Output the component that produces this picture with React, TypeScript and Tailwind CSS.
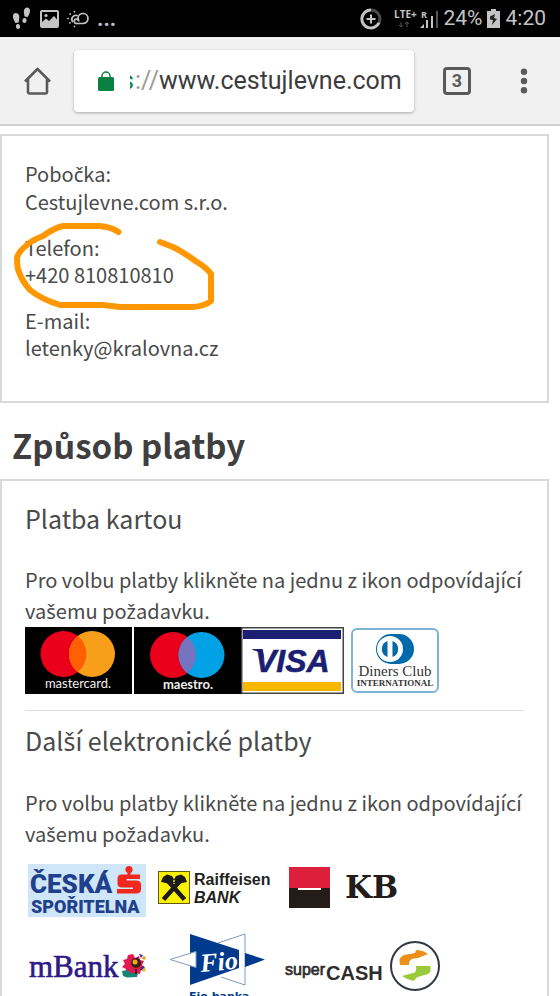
import type { ReactNode } from "react";

const PAYMENT_HINT =
  "Pro volbu platby klikněte na jednu z ikon odpovídající vašemu požadavku.";

interface CzechProps {
  text: string;
}

function Czech({ text }: CzechProps) {
  return (
    <>
      {text.split(/([čšž])/).map((part, i) =>
        i % 2 === 1 ? (
          <span key={i} className="font-['Noto_Sans',sans-serif]">
            {part}
          </span>
        ) : (
          part
        )
      )}
    </>
  );
}

function StatusBar() {
  return (
    <div className="flex h-[37px] shrink-0 items-center justify-between bg-black pr-[14px] pl-3 font-['Roboto',sans-serif] text-[#c4c4c4]">
      <div className="flex items-center gap-2">
        <svg className="h-6 w-5" viewBox="0 0 20 24" fill="currentColor">
          <path d="M4 6c2.400 0 3.600 2.200 3.300 4.600L6.700 15.500 3.400 16C2.200 13.500.8 11.200.9 9 1 7.200 2.200 6 4 6z" />
          <ellipse cx="6" cy="19.500" rx="2.100" ry="2.500" transform="rotate(-12 6 19.500)" />
          <path d="M15 .5c1.900 0 3 1.400 3 3.400 0 2.400-1.400 4.300-2.300 6.200l-3.200-.6-.6-4.200C11.600 2.700 12.800.5 15 .5z" />
          <ellipse cx="12.500" cy="13.500" rx="2.100" ry="2.500" transform="rotate(12 12.500 13.500)" />
        </svg>
        <svg className="h-[18px] w-[19px]" viewBox="0 0 19 18" fill="none">
          <rect x="1" y="1" width="17" height="16" rx="1" stroke="currentColor" strokeWidth="2" />
          <circle cx="6" cy="5.500" r="1.600" fill="currentColor" />
          <path d="M2 16v-4l4-3.500L9 11l5-5 3.500 4v6z" fill="currentColor" />
        </svg>
        <svg
          className="h-[18px] w-[22px]"
          viewBox="0 0 22 18"
          fill="none"
          stroke="currentColor"
          strokeWidth="1.700"
          strokeLinecap="round"
        >
          <path d="M9.500 13.500h6.500A5 5 0 1 0 11 8" />
          <path d="M11 8c0 1.200.3 2 .8 2.800M9.500 13.500A2.200 2.200 0 1 1 11.500 10.500" />
          <path d="M5.500 11.500A4 4 0 0 1 10 5.500" />
          <path d="M7.500 1.500v.3M3 4l.2.200M1 8.500h.3M2.800 13l.2-.2M7.500 16.500v-.2" />
        </svg>
        <span className="text-[22px] font-bold">...</span>
      </div>
      <div className="flex items-center gap-1">
        <svg className="mr-2 h-[22px] w-[22px]" viewBox="0 0 22 22" fill="none" strokeWidth="3">
          <path d="M11 2a9 9 0 0 1 9 9c0 1.500-.4 2.500-.9 3.600" stroke="#4b4b4b" />
          <path d="M11 2a9 9 0 1 0 8.100 12.600" stroke="currentColor" />
          <path d="M11 6.500v9M6.500 11h9" stroke="currentColor" strokeWidth="2" />
        </svg>
        <svg className="h-6 w-[46px] overflow-visible" viewBox="0 -4 46 24" fill="currentColor">
          <text x="0" y="7" fontSize="10" fontWeight="700" fontFamily="Open Sans">
            LTE+
          </text>
          <text x="27" y="7" fontSize="9" fontWeight="700" fontFamily="Open Sans">
            R
          </text>
          <path d="M7 11v5M5 14l2 2 2-2M13 16v-5M11 13l2-2 2 2" stroke="#555" fill="none" />
          <path d="M26 17h4v-4zM32 17V9h2v8zM37 17V5h2v12z" />
          <path d="M42 17V0h2v17z" fill="#555" />
        </svg>
        <span className="text-[21px]">24%</span>
        <svg className="h-5 w-[13px]" viewBox="0 0 13 20">
          <path d="M4 0h5v2h4v17H0V2h4z" fill="#c4c4c4" />
          <path d="M3 7.500 8 5 7 9l3 1-5 6 1-5-3-.5z" fill="#222" />
        </svg>
        <span className="ml-[2px] text-[21px]">4:20</span>
      </div>
    </div>
  );
}

function BrowserBar() {
  return (
    <header className="flex h-[89px] shrink-0 items-center border-b-2 border-[#d0d0d0] bg-[#f1f1f1] pr-[31px] pl-6 font-['Roboto',sans-serif]">
      <button type="button" aria-label="Home" className="text-[#5a5a5a]">
        <svg
          className="h-7 w-7"
          viewBox="0 0 28 28"
          fill="none"
          stroke="currentColor"
          strokeWidth="2.600"
          strokeLinejoin="round"
        >
          <path d="M1 14.500 13.500 2 26 14.500M4 12V25a1.500 1.500 0 0 0 1.500 1.500h16A1.500 1.500 0 0 0 23 25V12" />
        </svg>
      </button>
      <div className="ml-[22px] flex h-[62px] flex-1 items-center rounded-sm bg-white pl-6 text-[25px] shadow-[0_1px_3px_rgba(0,0,0,0.3)]">
        <svg className="h-5 w-4 shrink-0" viewBox="0 0 16 20">
          <path d="M4 8V5a4 4 0 0 1 8 0v3" fill="none" stroke="#0b8043" strokeWidth="1.500" />
          <rect y="6" width="16" height="14" rx="1.500" fill="#0b8043" />
        </svg>
        <span className="ml-4 flex h-8 w-1 shrink-0 items-center justify-end overflow-hidden text-[#0b8043]">
          s
        </span>
        <label htmlFor="address" className="pl-px text-[#9a9a9a]">
          ://
        </label>
        <input
          id="address"
          defaultValue="www.cestujlevne.com"
          className="w-0 flex-1 bg-transparent text-[#3c3c3c] outline-none"
        />
      </div>
      <button
        type="button"
        aria-label="Tabs"
        className="ml-[29px] h-7 w-7 rounded-sm border-3 border-[#5a5a5a] text-[18px] leading-[22px] font-bold text-[#5a5a5a]"
      >
        3
      </button>
      <button type="button" aria-label="Menu" className="ml-12 text-[#5a5a5a]">
        <svg className="h-7 w-[10px]" viewBox="0 0 10 28" fill="currentColor">
          <circle cx="5" cy="4.700" r="3.200" />
          <circle cx="5" cy="14" r="3.200" />
          <circle cx="5" cy="23.300" r="3.200" />
        </svg>
      </button>
    </header>
  );
}

function Mastercard() {
  return (
    <svg className="h-[67px] w-[107px]" viewBox="0 0 107 67">
      <rect width="107" height="67" fill="#000" />
      <circle cx="38.500" cy="27" r="23" fill="#eb001b" />
      <circle cx="67" cy="27" r="23" fill="#f79e1b" />
      <path d="M52.750 9a23 23 0 0 1 0 36 23 23 0 0 1 0-36z" fill="#ff5f00" />
      <text x="53" y="61" fontSize="13" fontFamily="Lato" fill="#eee" textAnchor="middle">
        mastercard.
      </text>
    </svg>
  );
}

function Maestro() {
  return (
    <svg className="h-[67px] w-[107px]" viewBox="0 0 107 67">
      <rect width="107" height="67" fill="#000" />
      <circle cx="39" cy="28" r="23" fill="#eb001b" />
      <circle cx="67.500" cy="28" r="23" fill="#00a2e5" />
      <path d="M53.250 10a23 23 0 0 1 0 36 23 23 0 0 1 0-36z" fill="#7673c0" />
      <text x="54" y="62" fontSize="13" fontWeight="700" fontFamily="Lato" fill="#eee" textAnchor="middle">
        maestro.
      </text>
    </svg>
  );
}

function Visa() {
  return (
    <svg className="h-[67px] w-[103px]" viewBox="0 0 103 67">
      <rect x=".75" y=".75" width="101.500" height="65.500" fill="#fff" stroke="#444" strokeWidth="1.500" />
      <rect x="2" y="3" width="98" height="9" fill="#1a1f71" />
      <rect x="2" y="55" width="98" height="9" fill="#f7b600" />
      <path d="M11.500 22h10l2 11c-2-5-5-8.500-12-10z" fill="#1a1f71" />
      <text
        x="14"
        y="45"
        fontSize="32"
        fontWeight="700"
        fontStyle="italic"
        fontFamily="Liberation Sans"
        fill="#1a1f71"
        stroke="#1a1f71"
        strokeWidth=".6"
      >
        VISA
      </text>
    </svg>
  );
}

function DinersClub() {
  return (
    <svg className="h-[67px] w-[88px]" viewBox="0 0 88 67">
      <rect x="1" y="2" width="86" height="63" rx="5" fill="#fff" stroke="#7fb3d5" strokeWidth="2" />
      <path d="M40 7h8a15 15 0 0 1 0 30h-8a15 15 0 0 1 0-30z" fill="#0069aa" />
      <circle cx="39" cy="22" r="13" fill="#fff" />
      <path d="M36.500 14v16a8.500 8.500 0 0 1 0-16zM41.500 14v16a8.500 8.500 0 0 0 0-16z" fill="#0069aa" />
      <text x="44" y="49" fontSize="15" fontFamily="Liberation Serif" fill="#333" textAnchor="middle">
        Diners Club
      </text>
      <text x="44" y="59" fontSize="9" fontWeight="700" fontFamily="Liberation Serif" fill="#333" textAnchor="middle">
        INTERNATIONAL
      </text>
    </svg>
  );
}

function CeskaSporitelna() {
  return (
    <svg className="h-[60px] w-[120px]" viewBox="0 0 120 60">
      <rect y="4" width="118" height="53" fill="#cfe6f8" />
      <g fill="#21408c" fontFamily="Roboto" fontWeight="900">
        <text x="2" y="33" fontSize="26">
          ČESKÁ
        </text>
        <text x="3" y="53" fontSize="18">
          SPOŘITELNA
        </text>
      </g>
      <g fill="#f0281e">
        <circle cx="101" cy="9.500" r="3.600" />
        <path d="M99.500 11h3v4h-3z" />
        <path d="M92 14.500h20v4.500H98.500v1.500H108q5 0 5 4v5q0 4-5 4H89v-4.500h16v-1.500H94q-4.500 0-4.500-4v-5q0-4 4.500-4z" />
      </g>
    </svg>
  );
}

function Raiffeisen() {
  return (
    <svg className="h-[60px] w-[120px]" viewBox="0 0 120 60">
      <rect x="2.500" y="11.500" width="31" height="32" fill="#fff200" stroke="#5f5a12" />
      <g stroke="#1a1a1a" strokeWidth="4.500" fill="none">
        <path d="M7.500 39.500 24 21M28.500 39.500 12 21" />
      </g>
      <path d="M16 25 10 23l-5-1 2-5 4-2.500 5 1.500 3 5zM20 25l6-2 5-1-2-5-4-2.500-5 1.500-3 5z" fill="#1a1a1a" />
      <g fill="#231f20" fontFamily="Liberation Sans" fontWeight="700" fontSize="16">
        <text x="38" y="25">
          Raiffeisen
        </text>
        <text x="38" y="43" fontStyle="italic">
          BANK
        </text>
      </g>
    </svg>
  );
}

function KomercniBanka() {
  return (
    <svg className="h-[60px] w-[120px]" viewBox="0 0 120 60">
      <rect x="5" y="7" width="41" height="21" fill="#dc1f3a" />
      <rect x="5" y="28" width="41" height="20" fill="#231c19" />
      <rect x="14" y="28" width="23" height="2" fill="#fff" />
      <text x="61" y="38" fontSize="31" fontWeight="700" fontFamily="DejaVu Serif" fill="#231c19">
        KB
      </text>
    </svg>
  );
}

function MBank() {
  return (
    <svg className="h-[76px] w-[120px]" viewBox="0 0 120 76">
      <text x="1" y="49" fontSize="31" fontFamily="Liberation Serif" fill="#2e1a87" stroke="#2e1a87" strokeWidth=".6">
        mBank
      </text>
      <path
        d="m105 26 2 4 4-2 1 4 4 1-2 4 3 3-4 2-1 4-4-1-3 3-3-3-4 1v-5l-4-2 3-3-2-4 4-1 1-4z"
        fill="#e4174f"
      />
      <circle cx="108" cy="35" r="5" fill="#3a2114" />
      <circle cx="107" cy="34" r="2.500" fill="#f0a81c" />
      <path d="m111 26 4 1-2 3zM112 40l4-2 1 4-3 1z" fill="#3b2b8f" />
      <circle cx="116" cy="30" r="1.800" fill="#f39a1e" />
      <circle cx="116" cy="42" r="1.800" fill="#f7c51e" />
      <path d="m94 43 5-1 4 3 7 .5-1 3.500-10 .5-4-1.500z" fill="#178474" />
      <path d="M107 41h2v5h-2z" fill="#222" />
    </svg>
  );
}

function FioBanka() {
  return (
    <svg className="h-[76px] w-[120px]" viewBox="0 0 120 76">
      <path d="m62 15 27-9v51l-24-8" fill="#fff" stroke="#7f9bc0" />
      <path d="m34 6 49 16v18L34 57z" fill="#003a8c" />
      <path d="m14 31.500 26-8v16z" fill="#fff" stroke="#7f9bc0" />
      <path d="m89 25 20 6.500L89 39z" fill="#003a8c" />
      <text
        x="45"
        y="44"
        fontSize="26"
        fontWeight="700"
        fontStyle="italic"
        fontFamily="Liberation Serif"
        fill="#fff"
        transform="rotate(-5 45 44)"
      >
        Fio
      </text>
      <text x="33" y="72" fontSize="11" fontWeight="700" fontFamily="DejaVu Sans" fill="#003a8c">
        Fio banka
      </text>
    </svg>
  );
}

function SuperCash() {
  return (
    <svg className="h-[76px] w-[160px]" viewBox="0 0 160 76">
      <g fill="#2d2d2d" fontFamily="Liberation Sans">
        <text x="1" y="47" fontSize="16" stroke="#2d2d2d" strokeWidth=".7">
          super
        </text>
        <text x="42" y="52" fontSize="20" fontWeight="700">
          CASH
        </text>
      </g>
      <circle cx="131" cy="38" r="24" fill="#fff" stroke="#333842" strokeWidth="2" />
      <path d="M116 37q-2-8 4-10l11-2 1-3q7 0 12 4l-10 4q-10 0-9 7z" fill="#ee8f1c" />
      <path d="M132 38h14.500v5q-1 3-6 4l-7 2-4 4q-6-1-11.500-5l11-3q4 0 3-7z" fill="#9aca3c" />
    </svg>
  );
}

interface LogoLinkProps {
  label: string;
  children: ReactNode;
}

function LogoLink({ label, children }: LogoLinkProps) {
  return (
    <a href="#" aria-label={label} className="block shrink-0">
      {children}
    </a>
  );
}

function ContactCard() {
  return (
    <section className="relative mr-[11px] border-2 border-[#d9d9d9] px-[23px] pt-6 pb-10 text-[20px] leading-[27px]">
      <div className="flex flex-col gap-[19px]">
        <p>
          <Czech text="Pobočka:" />
          <br />
          Cestujlevne.com s.r.o.
        </p>
        <p>
          Telefon:
          <br />
          +420 810810810
        </p>
        <p>
          E-mail:
          <br />
          letenky@kralovna.cz
        </p>
      </div>
      {/* hand-drawn highlight around the phone number */}
      <svg
        className="pointer-events-none absolute top-0 left-0 h-[190px] w-[220px]"
        viewBox="2 136 220 190"
        fill="none"
        stroke="#ff9800"
        strokeWidth="6"
        strokeLinecap="round"
        strokeLinejoin="round"
      >
        <path d="M118.500 232q-7-5-19-6H63q-9 2-20 10-11 4-16 9-9 7-10 13 0 10 2 14 3 9 11 18 11 9 30 15h43l17 2h73q12-1 18-6v-27q-4-6-14-12-14-10-24-15l-13-5" />
      </svg>
    </section>
  );
}

export default function App() {
  return (
    <div className="flex h-screen flex-col overflow-hidden bg-white font-['Noto_Sans_CJK_JP','Noto_Sans_CJK_SC','Open_Sans',sans-serif] text-[#4a4a4a]">
      <StatusBar />
      <BrowserBar />
      <main className="flex-1 overflow-hidden pt-2">
        <ContactCard />
        <h1 className="px-3 pt-[18px] pb-[10px] text-[33px] leading-12 font-bold text-[#3f3f3f]">
          Způsob platby
        </h1>
        <section className="mr-[11px] border-2 border-[#d9d9d9] px-[23px] pt-[17px]">
          <h2 className="text-[25px] leading-10">Platba kartou</h2>
          <p className="pt-[26px] text-[20px] leading-[31px]">
            <Czech text={PAYMENT_HINT} />
          </p>
          <div className="flex pb-4">
            <div className="flex gap-[2px]">
              <LogoLink label="Mastercard">
                <Mastercard />
              </LogoLink>
              <LogoLink label="Maestro">
                <Maestro />
              </LogoLink>
            </div>
            <LogoLink label="Visa">
              <Visa />
            </LogoLink>
            <div className="pl-[7px]">
              <LogoLink label="Diners Club">
                <DinersClub />
              </LogoLink>
            </div>
          </div>
          <hr className="border-[#dcdcdc]" />
          <h2 className="pt-[9px] text-[25px] leading-10">
            <Czech text="Další elektronické platby" />
          </h2>
          <p className="pt-[26px] text-[20px] leading-[31px]">
            <Czech text={PAYMENT_HINT} />
          </p>
          <div className="flex flex-col gap-2 pt-[10px] pl-[3px]">
            <div className="flex gap-2">
              <LogoLink label="Česká spořitelna">
                <CeskaSporitelna />
              </LogoLink>
              <LogoLink label="Raiffeisenbank">
                <Raiffeisen />
              </LogoLink>
              <LogoLink label="Komerční banka">
                <KomercniBanka />
              </LogoLink>
            </div>
            <div className="flex gap-2">
              <LogoLink label="mBank">
                <MBank />
              </LogoLink>
              <LogoLink label="Fio banka">
                <FioBanka />
              </LogoLink>
              <LogoLink label="superCASH">
                <SuperCash />
              </LogoLink>
            </div>
          </div>
        </section>
      </main>
    </div>
  );
}
